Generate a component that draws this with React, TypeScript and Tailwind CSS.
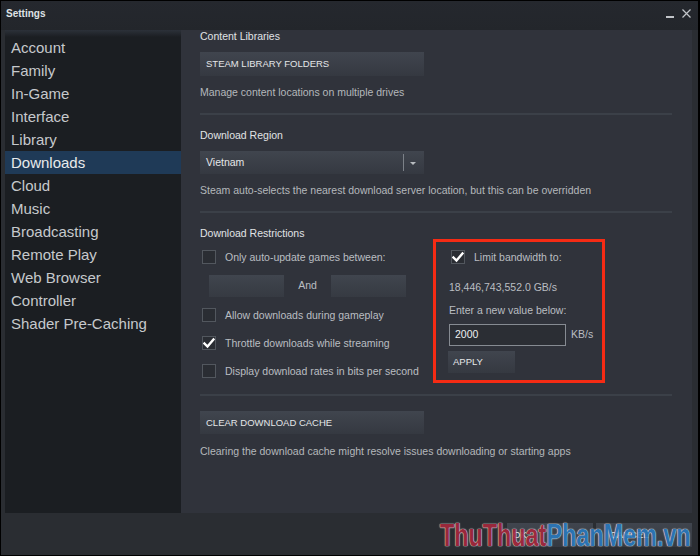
import React from "react";

const font = { fontFamily: '"Liberation Sans", Arial, sans-serif' };

function Check() {
  return (
    <svg width="12" height="12" viewBox="0 0 12 12" className="block">
      <polyline points="1.5,6.5 4.5,9.5 10.5,2.5" fill="none" stroke="#ffffff" strokeWidth="2.4" strokeLinecap="square" />
    </svg>
  );
}

function Box({ checked }: { checked?: boolean }) {
  return (
    <div className="w-[14px] h-[14px] shrink-0 border border-[#52575e] bg-[#2a2d33] flex items-center justify-center">
      {checked && <Check />}
    </div>
  );
}

function Btn({ label, w }: { label: string; w: string }) {
  return (
    <div className={`${w} h-[23px] pl-[6px] flex items-center bg-gradient-to-b from-[#40454e] to-[#353941] text-[9.5px] text-[#e4e6e8] leading-none`}>
      {label}
    </div>
  );
}

function Row({ label, checked, mt }: { label: string; checked?: boolean; mt: string }) {
  return (
    <div className={`${mt} ml-[2px] flex items-center gap-[9px] h-[14px]`}>
      <Box checked={checked} />
      <span className="text-[10.5px] leading-[12px] text-[#babec2] whitespace-nowrap">{label}</span>
    </div>
  );
}

function Sep({ mt }: { mt: string }) {
  return <div className={`${mt} w-[472px] h-[2px] bg-[#3b4048]`} />;
}

export default function App() {
  const items = [
    "Account",
    "Family",
    "In-Game",
    "Interface",
    "Library",
    "Downloads",
    "Cloud",
    "Music",
    "Broadcasting",
    "Remote Play",
    "Web Browser",
    "Controller",
    "Shader Pre-Caching",
  ];
  return (
    <div style={font} className="relative w-[700px] h-[556px] bg-black border-l border-t border-r-2 border-b border-black overflow-hidden">
      <div className="w-full h-full bg-[#2a2d32] flex flex-col">
        {/* title bar */}
        <div className="h-[29px] shrink-0 flex items-start justify-between bg-gradient-to-b from-[#25282e] to-[#23262b] pl-[5px] pr-[7px]">
          <span className="mt-[7px] text-[10px] font-bold text-[#dfe2e5] leading-[12px]">Settings</span>
          <div className="flex items-start gap-[8px] mt-[7px]">
            <div className="w-[8px] h-[2px] bg-[#c2c5c9] mt-[8px]" />
            <svg width="9" height="9" viewBox="0 0 9 9" className="mt-[1px]">
              <path d="M0.5 0.5 L8.5 8.5 M8.5 0.5 L0.5 8.5" stroke="#c2c5c9" strokeWidth="1.2" />
            </svg>
          </div>
        </div>
        {/* body */}
        <div className="h-[483px] shrink-0 flex pl-[4px] pr-[6px]">
          <div className="w-[176px] shrink-0 pt-[6px] bg-[linear-gradient(to_bottom,#2c3139_0px,#1b1e22_7px)]">
            {items.map((it) => (
              <div
                key={it}
                className={`h-[23px] leading-[23px] pl-[6px] text-[15px] whitespace-nowrap ${
                  it === "Downloads" ? "bg-[#1f3a57] text-[#e8eaec]" : "text-[#c6c9cc]"
                }`}
              >
                {it}
              </div>
            ))}
          </div>
          <div className="flex-1 bg-[#30333b] pl-[19px] flex flex-col">
            <div className="text-[10.5px] leading-[12px] text-[#e0e3e6]">Content Libraries</div>
            <div className="mt-[10px]">
              <Btn label="STEAM LIBRARY FOLDERS" w="w-[224px] h-[24px]" />
            </div>
            <div className="mt-[10px] text-[10.5px] leading-[12px] text-[#b4b8bc]">Manage content locations on multiple drives</div>
            <Sep mt="mt-[15px]" />
            <div className="mt-[14px] text-[10.5px] leading-[12px] text-[#e0e3e6]">Download Region</div>
            <div className="mt-[10px] w-[224px] h-[23px] flex items-center bg-gradient-to-b from-[#40454e] to-[#353941]">
              <span className="pl-[6px] flex-1 text-[10.5px] text-[#e4e6e8]">Vietnam</span>
              <div className="w-px h-[17px] bg-[#7c8188]" />
              <svg width="20" height="6" viewBox="0 0 20 6">
                <polygon points="6,2 12,2 9,5" fill="#b8bcc0" />
              </svg>
            </div>
            <div className="mt-[10px] text-[10.5px] leading-[12px] text-[#b4b8bc] whitespace-nowrap">
              Steam auto-selects the nearest download server location, but this can be overridden
            </div>
            <Sep mt="mt-[15px]" />
            <div className="mt-[14px] text-[10.5px] leading-[12px] text-[#e0e3e6]">Download Restrictions</div>
            <div className="flex">
              <div className="w-[233px] flex flex-col">
                <Row mt="mt-[11px]" label="Only auto-update games between:" />
                <div className="mt-[11px] ml-[9px] flex items-center h-[22px]">
                  <div className="w-[75px] h-[22px] bg-gradient-to-b from-[#40454e] to-[#363a42]" />
                  <div className="w-[47px] text-center text-[10.5px] text-[#babec2]">And</div>
                  <div className="w-[75px] h-[22px] bg-gradient-to-b from-[#40454e] to-[#363a42]" />
                </div>
                <Row mt="mt-[11px]" label="Allow downloads during gameplay" />
                <Row mt="mt-[14px]" label="Throttle downloads while streaming" checked />
                <Row mt="mt-[14px]" label="Display download rates in bits per second" />
              </div>
              <div className="w-[172px] h-[144px] border-[3px] border-[#f52b14] flex flex-col">
                <div className="mt-[8px] ml-[15px] flex items-center gap-[9px] h-[14px]">
                  <Box checked />
                  <span className="text-[10.5px] leading-[12px] text-[#babec2]">Limit bandwidth to:</span>
                </div>
                <div className="mt-[17px] ml-[13px] text-[10.5px] leading-[12px] text-[#babec2]">18,446,743,552.0 GB/s</div>
                <div className="mt-[11px] ml-[13px] text-[10.5px] leading-[12px] text-[#babec2]">Enter a new value below:</div>
                <div className="mt-[8px] ml-[13px] flex items-center">
                  <div className="w-[117px] h-[22px] border border-[#868b92] bg-[#2b2e34] pl-[5px] flex items-center text-[10.5px] text-[#eceef0]">
                    2000
                  </div>
                  <span className="ml-[5px] text-[10.5px] text-[#babec2]">KB/s</span>
                </div>
                <div className="mt-[5px] ml-[12px]">
                  <div className="w-[67px] h-[22px] pl-[5px] flex items-center bg-gradient-to-b from-[#40454e] to-[#353941] text-[9.5px] text-[#e4e6e8]">
                    APPLY
                  </div>
                </div>
              </div>
            </div>
            <Sep mt="mt-[11px]" />
            <div className="mt-[15px]">
              <Btn label="CLEAR DOWNLOAD CACHE" w="w-[224px]" />
            </div>
            <div className="mt-[11px] text-[10.5px] leading-[12px] text-[#b4b8bc] whitespace-nowrap">
              Clearing the download cache might resolve issues downloading or starting apps
            </div>
          </div>
        </div>
        {/* bottom bar */}
        <div className="flex-1 flex justify-end items-start pt-[10px] pr-[6px] gap-[3px]">
          <div className="w-[86px] h-[24px] pl-[6px] flex items-center bg-gradient-to-b from-[#40454e] to-[#353941] text-[9.5px] text-[#e4e6e8]">OK</div>
          <div className="w-[96px] h-[24px] pl-[14px] flex items-center bg-gradient-to-b from-[#40454e] to-[#353941] text-[9.5px] text-[#e4e6e8]">CANCEL</div>
        </div>
      </div>
      {/* watermark */}
      <div className="absolute left-[439px] top-[518px] whitespace-nowrap text-[32px] leading-[32px] font-bold origin-left scale-x-[0.73] opacity-90 [text-shadow:0_0_1px_#e8e8e8,0_0_1px_#e8e8e8,0_0_2px_#cfcfcf]">
        <span className="text-[#a6283d]">ThuThuat</span>
        <span className="text-[#2a79bd]">PhanMem.vn</span>
      </div>
    </div>
  );
}
